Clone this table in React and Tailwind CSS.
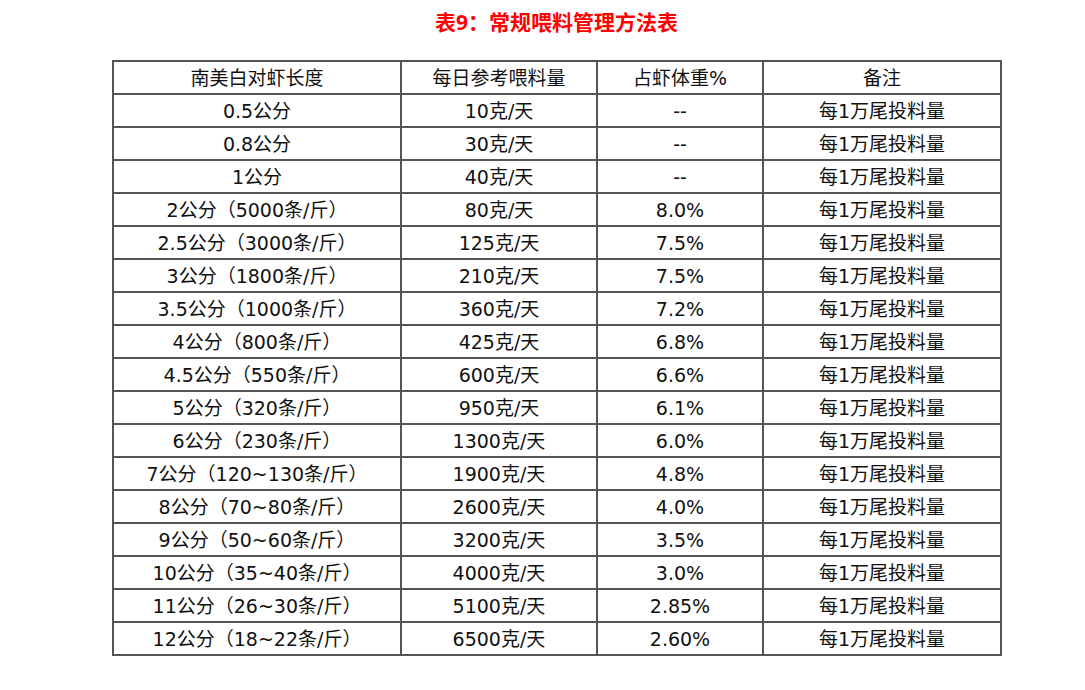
import React from 'react';

const rows = [
  ['0.5公分', '10克/天', '--'],
  ['0.8公分', '30克/天', '--'],
  ['1公分', '40克/天', '--'],
  ['2公分（5000条/斤）', '80克/天', '8.0%'],
  ['2.5公分（3000条/斤）', '125克/天', '7.5%'],
  ['3公分（1800条/斤）', '210克/天', '7.5%'],
  ['3.5公分（1000条/斤）', '360克/天', '7.2%'],
  ['4公分（800条/斤）', '425克/天', '6.8%'],
  ['4.5公分（550条/斤）', '600克/天', '6.6%'],
  ['5公分（320条/斤）', '950克/天', '6.1%'],
  ['6公分（230条/斤）', '1300克/天', '6.0%'],
  ['7公分（120~130条/斤）', '1900克/天', '4.8%'],
  ['8公分（70~80条/斤）', '2600克/天', '4.0%'],
  ['9公分（50~60条/斤）', '3200克/天', '3.5%'],
  ['10公分（35~40条/斤）', '4000克/天', '3.0%'],
  ['11公分（26~30条/斤）', '5100克/天', '2.85%'],
  ['12公分（18~22条/斤）', '6500克/天', '2.60%'],
];

const cell = 'border-2 border-[#555555] h-[33px] pt-[2px] pb-0 px-0 text-center align-middle';

function App() {
  return (
    <div
      className="w-[1085px] h-[690px] bg-white text-[#111111]"
      style={{ fontFamily: '"DejaVu Sans", "Noto Sans CJK SC", sans-serif' }}
    >
      <div className="h-[60px] pl-[113px] w-[1000px] flex justify-center items-start pt-[6px]">
        <h1
          className="text-[21px] font-bold text-[#ff0000] leading-[32px]"
          style={{ fontFamily: '"Noto Sans", "Noto Sans CJK SC", sans-serif' }}
        >
          表9：常规喂料管理方法表
        </h1>
      </div>
      <table className="ml-[112px] w-[888px] border-collapse table-fixed text-[19px] leading-none">
        <colgroup>
          <col className="w-[288px]" />
          <col className="w-[196px]" />
          <col className="w-[166px]" />
          <col className="w-[238px]" />
        </colgroup>
        <thead>
          <tr>
            <th className={`${cell} font-normal`}>南美白对虾长度</th>
            <th className={`${cell} font-normal`}>每日参考喂料量</th>
            <th className={`${cell} font-normal`}>占虾体重%</th>
            <th className={`${cell} font-normal`}>备注</th>
          </tr>
        </thead>
        <tbody>
          {rows.map((r) => (
            <tr key={r[0]}>
              <td className={cell}>{r[0]}</td>
              <td className={cell}>{r[1]}</td>
              <td className={cell}>{r[2]}</td>
              <td className={cell}>每1万尾投料量</td>
            </tr>
          ))}
        </tbody>
      </table>
    </div>
  );
}

export default App;
